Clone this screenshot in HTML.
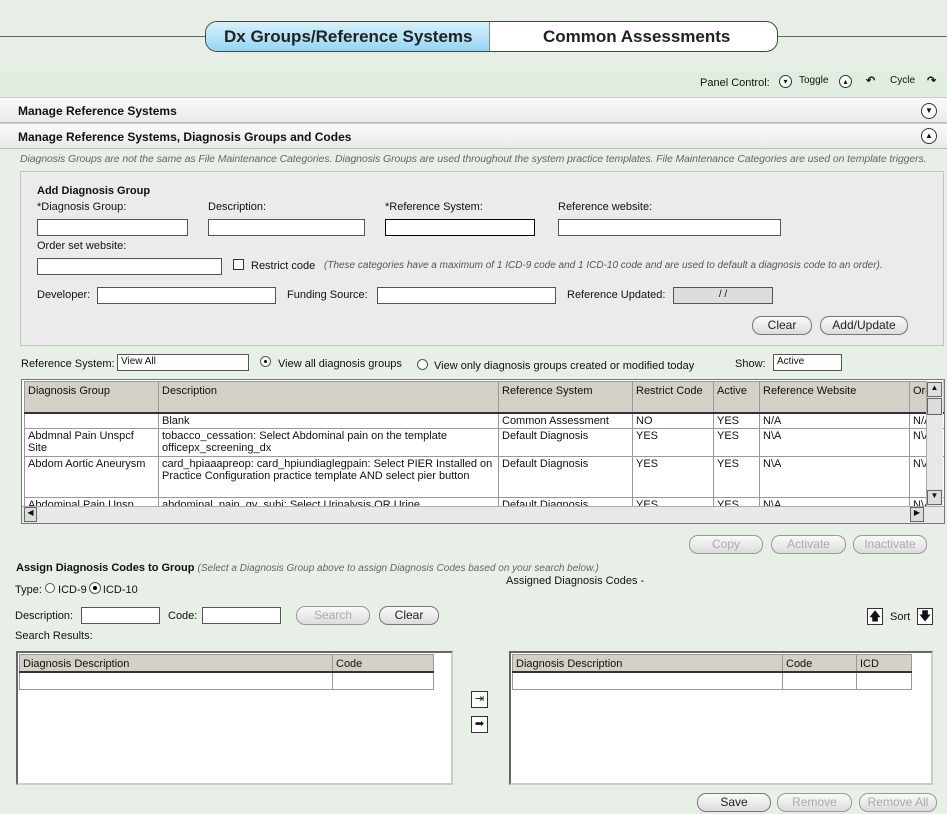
<!DOCTYPE html>
<html><head><style>
*{box-sizing:border-box}
body{margin:0;width:947px;height:814px;background:#e7efe6;font-family:"Liberation Sans",sans-serif;font-size:10px;color:#111;position:relative;overflow:hidden}
.a{position:absolute;white-space:nowrap}
.in{position:absolute;background:#fff;border:1px solid #555;height:17px;font-size:10px;padding:1px 3px}
.btn{position:absolute;border:1px solid #777;border-radius:9px;background:linear-gradient(#fafafa,#dcdcdc);text-align:center;font-size:12px;height:19px;line-height:17px;color:#222}
.dis{color:#aaa;border-color:#999}
.hdr{position:absolute;left:0;width:947px;height:26px;background:linear-gradient(#fafafa,#e9e9e9);border-top:1px solid #ccc;border-bottom:1px solid #bbb;font-weight:bold;font-size:12px;padding:6px 18px}
.circ{position:absolute;width:16px;height:16px;border:1px solid #333;border-radius:50%;background:#fff;font-size:8px;text-align:center;line-height:14px}
table{border-collapse:collapse;font-size:11px;table-layout:fixed}
td,th{border:1px solid #999;padding:1px 3px;text-align:left;vertical-align:top;font-weight:normal;overflow:hidden;white-space:normal}
th{background:#d4d0c8;border-bottom:2px solid #333;vertical-align:top;padding-top:3px}
</style></head><body>
<div class="a" style="left:0;top:0;width:947px;height:72px;background:#e6eee5"></div>
<div class="a" style="left:0;top:36px;width:947px;height:1px;background:#666"></div>
<div class="a" style="left:205px;top:21px;width:573px;height:31px;border:1px solid #444;border-radius:12px;background:#fff;overflow:hidden">
<div class="a" style="left:0;top:0;width:284px;height:31px;background:linear-gradient(#d6f1fb,#8fd4f2);border-right:1px solid #888"></div>
<div class="a" style="left:18px;top:5px;font-size:17px;font-weight:bold;color:#222">Dx Groups/Reference Systems</div>
<div class="a" style="left:337px;top:5px;font-size:17px;font-weight:bold;color:#222">Common Assessments</div>
</div>
<div class="a" style="left:0;top:72px;width:947px;height:25px;background:#e1ede0"></div>
<div class="a" style="left:700px;top:77px;font-size:11px">Panel Control:</div>
<div class="circ" style="left:779px;top:75px;width:13px;height:13px;line-height:11px">▾</div>
<div class="a" style="left:799px;top:75px;font-size:10px">Toggle</div>
<div class="circ" style="left:839px;top:75px;width:13px;height:13px;line-height:11px">▴</div>
<div class="a" style="left:866px;top:74px;font-size:11px;font-weight:bold">↶</div>
<div class="a" style="left:890px;top:75px;font-size:10px">Cycle</div>
<div class="a" style="left:927px;top:74px;font-size:11px;font-weight:bold">↷</div>
<div class="hdr" style="top:97px">Manage Reference Systems</div>
<div class="circ" style="left:921px;top:103px">▼</div>
<div class="hdr" style="top:123px">Manage Reference Systems, Diagnosis Groups and Codes</div>
<div class="circ" style="left:921px;top:128px">▲</div>
<div class="a" style="left:20px;top:153px;font-size:10.5px;font-style:italic;color:#666;letter-spacing:-0.1px">Diagnosis Groups are not the same as File Maintenance Categories. Diagnosis Groups are used throughout the system practice templates. File Maintenance Categories are used on template triggers.</div>
<div class="a" style="left:20px;top:171px;width:924px;height:175px;background:#ebebeb;border:1px solid #c4c4c4"></div>
<div class="a" style="left:37px;top:185px;font-weight:bold;font-size:11px">Add Diagnosis Group</div>
<div class="a" style="left:37px;top:201px;font-size:11px">*Diagnosis Group:</div>
<div class="a" style="left:208px;top:201px;font-size:11px">Description:</div>
<div class="a" style="left:385px;top:201px;font-size:11px">*Reference System:</div>
<div class="a" style="left:558px;top:201px;font-size:11px">Reference website:</div>
<div class="in" style="left:37px;top:219px;width:151px"></div>
<div class="in" style="left:208px;top:219px;width:157px"></div>
<div class="in" style="left:385px;top:219px;width:150px;border-color:#000"></div>
<div class="in" style="left:558px;top:219px;width:223px"></div>
<div class="a" style="left:37px;top:240px;font-size:11px">Order set website:</div>
<div class="in" style="left:37px;top:258px;width:185px"></div>
<div class="a" style="left:233px;top:259px;width:11px;height:11px;border:1px solid #333;background:#fff"></div>
<div class="a" style="left:251px;top:260px;font-size:11px">Restrict code</div>
<div class="a" style="left:324px;top:260px;font-size:10px;font-style:italic;color:#555">(These categories have a maximum of 1 ICD-9 code and 1 ICD-10 code and are used to default a diagnosis code to an order).</div>
<div class="a" style="left:37px;top:289px;font-size:11px">Developer:</div>
<div class="in" style="left:97px;top:287px;width:179px"></div>
<div class="a" style="left:287px;top:289px;font-size:11px">Funding Source:</div>
<div class="in" style="left:377px;top:287px;width:179px"></div>
<div class="a" style="left:567px;top:289px;font-size:11px">Reference Updated:</div>
<div class="in" style="left:673px;top:287px;width:100px;background:#ddd;text-align:center">/ /</div>
<div class="btn" style="left:752px;top:316px;width:60px">Clear</div>
<div class="btn" style="left:820px;top:316px;width:88px">Add/Update</div>
<div class="a" style="left:21px;top:358px;font-size:11px">Reference System:</div>
<div class="in" style="left:117px;top:354px;width:132px">View All</div>
<div class="a" style="left:260px;top:356px;width:11px;height:11px;border:1px solid #555;border-radius:50%;background:#fff"><div class="a" style="left:3px;top:3px;width:3px;height:3px;background:#000;border-radius:50%"></div></div>
<div class="a" style="left:278px;top:358px;font-size:11px">View all diagnosis groups</div>
<div class="a" style="left:417px;top:359px;width:11px;height:11px;border:1px solid #555;border-radius:50%;background:#fff"></div>
<div class="a" style="left:434px;top:360px;font-size:11px">View only diagnosis groups created or modified today</div>
<div class="a" style="left:735px;top:358px;font-size:11px">Show:</div>
<div class="in" style="left:773px;top:354px;width:69px">Active</div>
<div class="a" style="left:21px;top:379px;width:924px;height:145px;border:1px solid #777;background:#fff;overflow:hidden">
<table style="position:absolute;left:2px;top:1px;width:1000px">
<colgroup><col style="width:134px"><col style="width:340px"><col style="width:134px"><col style="width:81px"><col style="width:46px"><col style="width:150px"><col style="width:115px"></colgroup>
<tr style="height:31px"><th>Diagnosis Group</th><th>Description</th><th>Reference System</th><th>Restrict Code</th><th>Active</th><th>Reference Website</th><th>Order</th></tr>
<tr style="height:16px"><td></td><td>Blank</td><td>Common Assessment</td><td>NO</td><td>YES</td><td>N/A</td><td>N/A</td></tr>
<tr style="height:28px"><td>Abdmnal Pain Unspcf Site</td><td>tobacco_cessation: Select Abdominal pain on the template officepx_screening_dx</td><td>Default Diagnosis</td><td>YES</td><td>YES</td><td>N\A</td><td>N\A</td></tr>
<tr style="height:41px"><td>Abdom Aortic Aneurysm</td><td>card_hpiaaapreop: card_hpiundiaglegpain: Select PIER Installed on Practice Configuration practice template AND select pier button</td><td>Default Diagnosis</td><td>YES</td><td>YES</td><td>N\A</td><td>N\A</td></tr>
<tr><td>Abdominal Pain Unsp</td><td>abdominal_pain_gy_subj: Select Urinalysis OR Urine</td><td>Default Diagnosis</td><td>YES</td><td>YES</td><td>N\A</td><td>N\A</td></tr>
</table>
<div class="a" style="left:904px;top:1px;width:17px;height:125px;background:#e8e8e8;border-left:1px solid #aaa"></div>
<div class="a" style="left:905px;top:2px;width:15px;height:15px;background:#ddd;border:1px solid #666;font-size:8px;text-align:center">▲</div>
<div class="a" style="left:905px;top:18px;width:15px;height:17px;background:#ddd;border:1px solid #666"></div>
<div class="a" style="left:905px;top:110px;width:15px;height:15px;background:#ddd;border:1px solid #666;font-size:8px;text-align:center">▼</div>
<div class="a" style="left:0;top:126px;width:922px;height:17px;background:#e8e8e8;border-top:1px solid #aaa"></div>
<div class="a" style="left:2px;top:127px;width:13px;height:15px;background:#ddd;border:1px solid #666;font-size:8px;text-align:center">◀</div>
<div class="a" style="left:888px;top:127px;width:14px;height:15px;background:#ddd;border:1px solid #666;font-size:8px;text-align:center">▶</div>
</div>
<div class="btn dis" style="left:689px;top:535px;width:74px">Copy</div>
<div class="btn dis" style="left:771px;top:535px;width:75px">Activate</div>
<div class="btn dis" style="left:853px;top:535px;width:74px">Inactivate</div>
<div class="a" style="left:16px;top:562px;font-weight:bold;font-size:11px">Assign Diagnosis Codes to Group <span style="font-weight:normal;font-style:italic;color:#666;font-size:10px">(Select a Diagnosis Group above to assign Diagnosis Codes based on your search below.)</span></div>
<div class="a" style="left:506px;top:575px;font-size:11px">Assigned Diagnosis Codes -</div>
<div class="a" style="left:15px;top:583px;font-size:11px">Type: <span style="display:inline-block;width:10px;height:10px;border:1px solid #555;border-radius:50%;background:#fff"></span> ICD-9 <span style="display:inline-block;width:10px;height:10px;border:3px solid #fff;outline:1px solid #555;border-radius:50%;background:#000"></span> ICD-10</div>
<div class="a" style="left:15px;top:610px;font-size:11px">Description:</div>
<div class="in" style="left:81px;top:607px;width:79px"></div>
<div class="a" style="left:168px;top:610px;font-size:11px">Code:</div>
<div class="in" style="left:202px;top:607px;width:79px"></div>
<div class="btn dis" style="left:296px;top:606px;width:74px">Search</div>
<div class="btn" style="left:379px;top:606px;width:60px">Clear</div>
<div class="a" style="left:867px;top:608px;width:16px;height:17px;border:1px solid #333;background:#fff;text-align:center;font-size:12px;line-height:15px">🡅</div>
<div class="a" style="left:890px;top:611px;font-size:11px">Sort</div>
<div class="a" style="left:917px;top:608px;width:16px;height:17px;border:1px solid #333;background:#fff;text-align:center;font-size:12px;line-height:15px">🡇</div>
<div class="a" style="left:15px;top:630px;font-size:11px">Search Results:</div>
<div class="a" style="left:16px;top:651px;width:437px;height:134px;border:2px solid #666;border-right-color:#ccc;border-bottom-color:#ccc;background:#fff">
<table style="position:absolute;left:1px;top:1px;width:415px"><colgroup><col style="width:313px"><col></colgroup><tr><th>Diagnosis Description</th><th>Code</th></tr><tr style="height:17px"><td></td><td></td></tr></table></div>
<div class="a" style="left:471px;top:691px;width:17px;height:17px;border:1px solid #333;background:#fff;font-size:11px;text-align:center;line-height:15px">⇥</div>
<div class="a" style="left:471px;top:716px;width:17px;height:17px;border:1px solid #333;background:#fff;font-size:11px;text-align:center;line-height:15px">➡</div>
<div class="a" style="left:509px;top:651px;width:424px;height:134px;border:2px solid #666;border-right-color:#ccc;border-bottom-color:#ccc;background:#fff">
<table style="position:absolute;left:1px;top:1px;width:400px"><colgroup><col style="width:270px"><col style="width:74px"><col></colgroup><tr><th>Diagnosis Description</th><th>Code</th><th>ICD</th></tr><tr style="height:17px"><td></td><td></td><td></td></tr></table></div>
<div class="btn" style="left:697px;top:793px;width:74px">Save</div>
<div class="btn dis" style="left:777px;top:793px;width:75px">Remove</div>
<div class="btn dis" style="left:859px;top:793px;width:78px">Remove All</div>
</body></html>
